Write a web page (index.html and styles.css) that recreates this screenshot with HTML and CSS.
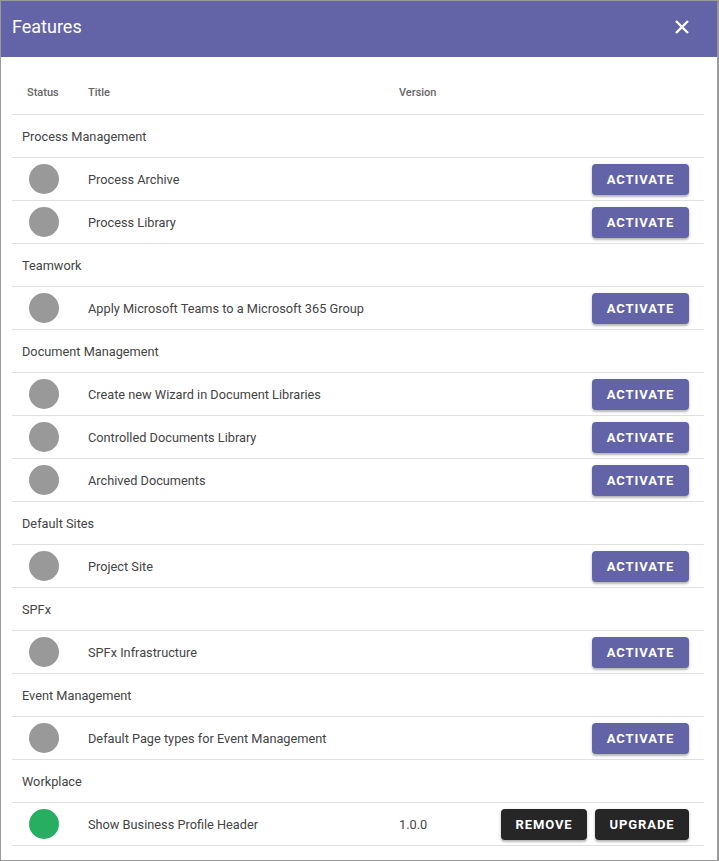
FILE: index.html
```html
<!DOCTYPE html>
<html>
<head>
<meta charset="utf-8">
<link rel="stylesheet" href="styles.css">
</head>
<body>
<div class="dialog">
  <div class="dialog-header">
    <span class="dialog-title">Features</span>
    <svg class="close" width="16" height="16" viewBox="0 0 16 16"><path d="M2 2L14 14M14 2L2 14" stroke="#fff" stroke-width="2.4" fill="none"/></svg>
  </div>
  <div class="content">
    <div class="thead">
      <span class="c-status">Status</span>
      <span class="c-title">Title</span>
      <span class="c-version">Version</span>
    </div>

    <div class="group">Process Management</div>
    <div class="row"><span class="c-status"><i class="dot"></i></span><span class="c-title">Process Archive</span><span class="c-version"></span><span class="c-actions"><button class="btn primary">Activate</button></span></div>
    <div class="row"><span class="c-status"><i class="dot"></i></span><span class="c-title">Process Library</span><span class="c-version"></span><span class="c-actions"><button class="btn primary">Activate</button></span></div>

    <div class="group">Teamwork</div>
    <div class="row"><span class="c-status"><i class="dot"></i></span><span class="c-title">Apply Microsoft Teams to a Microsoft 365 Group</span><span class="c-version"></span><span class="c-actions"><button class="btn primary">Activate</button></span></div>

    <div class="group">Document Management</div>
    <div class="row"><span class="c-status"><i class="dot"></i></span><span class="c-title">Create new Wizard in Document Libraries</span><span class="c-version"></span><span class="c-actions"><button class="btn primary">Activate</button></span></div>
    <div class="row"><span class="c-status"><i class="dot"></i></span><span class="c-title">Controlled Documents Library</span><span class="c-version"></span><span class="c-actions"><button class="btn primary">Activate</button></span></div>
    <div class="row"><span class="c-status"><i class="dot"></i></span><span class="c-title">Archived Documents</span><span class="c-version"></span><span class="c-actions"><button class="btn primary">Activate</button></span></div>

    <div class="group">Default Sites</div>
    <div class="row"><span class="c-status"><i class="dot"></i></span><span class="c-title">Project Site</span><span class="c-version"></span><span class="c-actions"><button class="btn primary">Activate</button></span></div>

    <div class="group">SPFx</div>
    <div class="row"><span class="c-status"><i class="dot"></i></span><span class="c-title">SPFx Infrastructure</span><span class="c-version"></span><span class="c-actions"><button class="btn primary">Activate</button></span></div>

    <div class="group">Event Management</div>
    <div class="row"><span class="c-status"><i class="dot"></i></span><span class="c-title">Default Page types for Event Management</span><span class="c-version"></span><span class="c-actions"><button class="btn primary">Activate</button></span></div>

    <div class="group">Workplace</div>
    <div class="row"><span class="c-status"><i class="dot on"></i></span><span class="c-title">Show Business Profile Header</span><span class="c-version">1.0.0</span><span class="c-actions"><button class="btn dark remove">Remove</button><button class="btn dark upgrade">Upgrade</button></span></div>
  </div>
</div>
</body>
</html>
```

FILE: styles.css
```css
html, body {
  margin: 0;
  padding: 0;
  background: #fff;
}
body {
  font-family: Roboto, "Liberation Sans", Arial, sans-serif;
}
.dialog {
  width: 716px;
  height: 859px;
  border: 1px solid #9a9a9a;
  border-right-width: 2px;
  background: #fff;
  box-sizing: content-box;
  overflow: hidden;
}
.dialog-header {
  height: 56px;
  box-sizing: border-box;
  background: #6264a7;
  display: flex;
  align-items: center;
  justify-content: space-between;
  padding: 0 27px 5px 11px;
}
.dialog-title {
  color: #fff;
  font-size: 18px;
  font-weight: 400;
}
.close {
  display: block;
}
.content {
  padding: 14px 13px 0 11px;
}
.thead, .row, .group {
  display: flex;
  align-items: center;
  border-bottom: 1px solid #e0e0e0;
  box-sizing: border-box;
}
.thead {
  height: 44px;
  font-size: 11px;
  font-weight: 500;
  color: #666;
}
.c-status {
  flex: none;
  box-sizing: border-box;
  width: 76px;
}
.thead .c-status {
  padding-left: 15px;
}
.row, .group {
  height: 43px;
}
.group {
  padding-left: 10px;
  font-size: 12.75px;
  color: #444;
}
.row {
  font-size: 12.75px;
  color: #444;
}
.row .c-status {
  padding-left: 17px;
  display: flex;
}
.c-title {
  width: 311px;
  flex: none;
}
.c-version {
  width: 80px;
  flex: none;
}
.c-actions {
  flex: 1;
  display: flex;
  justify-content: flex-end;
  gap: 8px;
  padding-right: 15px;
}
.dot {
  display: block;
  width: 30px;
  height: 30px;
  border-radius: 50%;
  background: #999;
}
.dot.on {
  background: #27ae60;
}
.btn {
  font-family: Roboto, "Liberation Sans", Arial, sans-serif;
  height: 31px;
  border: none;
  border-radius: 4px;
  color: #fff;
  font-size: 13px;
  font-weight: 700;
  text-transform: uppercase;
  letter-spacing: 0.9px;
  padding: 0;
  box-shadow: 0 2px 2px rgba(0,0,0,0.22), 0 1px 4px rgba(0,0,0,0.12);
}
.btn.primary {
  background: #6264a7;
  width: 97px;
}
.btn.dark {
  background: #262626;
}
.btn.remove { width: 86px; }
.btn.upgrade { width: 94px; }
```
